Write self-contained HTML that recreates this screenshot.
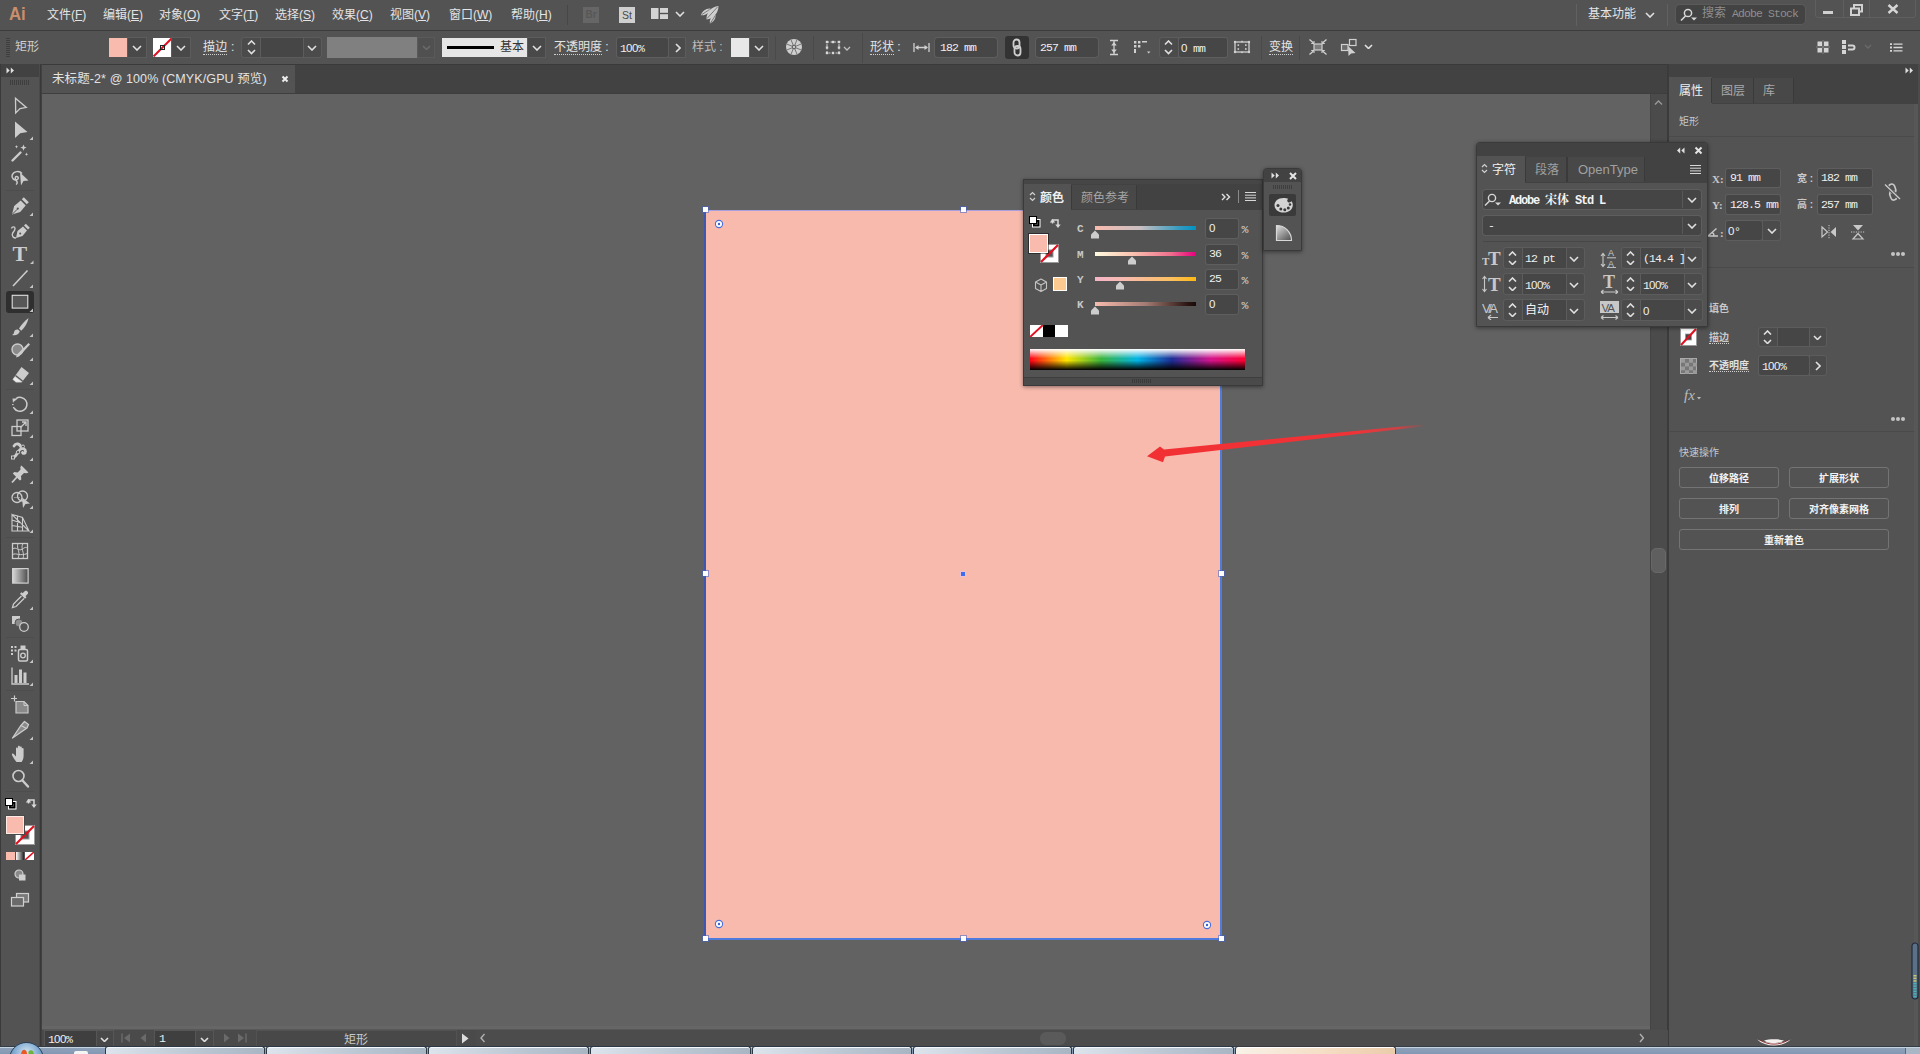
<!DOCTYPE html>
<html lang="zh-CN"><head><meta charset="utf-8"><title>Adobe Illustrator</title>
<style>
html,body{margin:0;padding:0}
body{width:1920px;height:1054px;overflow:hidden;position:relative;background:#535353;font-family:'Liberation Sans','Noto Sans CJK SC',sans-serif;font-size:12px;color:#dedede}
body>div,body>svg{position:absolute;box-sizing:border-box}
.t{white-space:nowrap}
.n{font-family:'Liberation Mono','Noto Sans CJK SC',monospace;font-size:11.5px;line-height:14px;letter-spacing:-0.9px}
.z{font-family:'Liberation Sans',sans-serif;letter-spacing:-0.4px}
.u{border-bottom:1px dotted #d0d0d0}
</style></head><body>
<div style="left:0px;top:0px;width:1920px;height:30px;background:#535353;"></div>
<div style="left:0px;top:30px;width:1920px;height:1px;background:#3c3c3c;"></div>
<div class="t" style="left:9px;top:3px;font-size:19px;line-height:22px;color:#c98f6d;font-family:'Liberation Sans','Noto Sans CJK SC',sans-serif;transform:scaleX(.88);transform-origin:0 0"><b>Ai</b></div>
<div class="t" style="left:47px;top:7px;font-size:12px;line-height:16px;color:#e4e4e4;">文件(<u>F</u>)</div>
<div class="t" style="left:103px;top:7px;font-size:12px;line-height:16px;color:#e4e4e4;">编辑(<u>E</u>)</div>
<div class="t" style="left:159px;top:7px;font-size:12px;line-height:16px;color:#e4e4e4;">对象(<u>O</u>)</div>
<div class="t" style="left:219px;top:7px;font-size:12px;line-height:16px;color:#e4e4e4;">文字(<u>T</u>)</div>
<div class="t" style="left:275px;top:7px;font-size:12px;line-height:16px;color:#e4e4e4;">选择(<u>S</u>)</div>
<div class="t" style="left:332px;top:7px;font-size:12px;line-height:16px;color:#e4e4e4;">效果(<u>C</u>)</div>
<div class="t" style="left:390px;top:7px;font-size:12px;line-height:16px;color:#e4e4e4;">视图(<u>V</u>)</div>
<div class="t" style="left:449px;top:7px;font-size:12px;line-height:16px;color:#e4e4e4;">窗口(<u>W</u>)</div>
<div class="t" style="left:511px;top:7px;font-size:12px;line-height:16px;color:#e4e4e4;">帮助(<u>H</u>)</div>
<div style="left:567px;top:5px;width:1px;height:20px;background:#474747;"></div>
<div style="left:583px;top:7px;width:16px;height:16px;background:#666666;"></div>
<div class="t" style="left:585.5px;top:8px;font-size:10px;line-height:14px;color:#575757;font-family:'Liberation Sans','Noto Sans CJK SC',sans-serif;"><b>Br</b></div>
<div style="left:619px;top:7px;width:16px;height:16px;background:#cfcfcf;"></div>
<div class="t" style="left:622px;top:8px;font-size:10.5px;line-height:14px;color:#4a4a4a;font-family:'Liberation Sans','Noto Sans CJK SC',sans-serif;">St</div>
<svg style="left:651px;top:8px;" width="17" height="11" viewBox="0 0 17 11"><rect x="0" y="0" width="7.500" height="11" fill="#d4d4d4"/><rect x="9" y="0" width="8" height="4.800" fill="#d4d4d4"/><rect x="9" y="6.200" width="8" height="4.800" fill="#d4d4d4"/></svg>
<svg style="left:675.0px;top:11.0px;" width="10" height="6" viewBox="0 0 10 6"><polyline points="1,1 5.0,5 9,1" fill="none" stroke="#e0e0e0" stroke-width="1.6"/></svg>
<svg style="left:700px;top:5px;" width="20" height="19" viewBox="0 0 20 19"><path d="M18.500 1C11 1.500 6 8 6.500 14.500 13 14 18.500 8 18.500 1z" fill="#cfcfcf"/><path d="M10.500 3.500C6 3 2 6.500 0.800 10.200 5 11 9.500 8 10.500 3.500z" fill="#cfcfcf"/><path d="M15.500 10c0.500 3.500-2 7-5.500 8.500-1-3.500 1.500-7.500 5.500-8.500z" fill="#cfcfcf"/><path d="M17.500 2L7 13.500M9.500 4.500L1.500 9.800M15 11l-4.500 7" stroke="#535353" stroke-width="0.700"/></svg>
<div style="left:1576px;top:4px;width:1px;height:22px;background:#616161;"></div>
<div style="left:1667px;top:4px;width:1px;height:22px;background:#616161;"></div>
<div class="t" style="left:1588px;top:6px;font-size:12px;line-height:16px;color:#e4e4e4;">基本功能</div>
<svg style="left:1644.5px;top:12.0px;" width="10" height="6" viewBox="0 0 10 6"><polyline points="1,1 5.0,5 9,1" fill="none" stroke="#e0e0e0" stroke-width="1.6"/></svg>
<div style="left:1676px;top:5px;width:129px;height:19px;background:#434343;border-radius:4px;box-shadow:0 0 0 1px #5a5a5a"></div>
<svg style="left:1680px;top:8px;" width="18" height="14" viewBox="0 0 18 14"><circle cx="8" cy="5" r="3.6" fill="none" stroke="#d8d8d8" stroke-width="1.5"/><line x1="5.5" y1="8" x2="1" y2="12.5" stroke="#d8d8d8" stroke-width="1.6"/><path d="M11 9.5h6l-3 3z" fill="#d8d8d8"/></svg>
<div class="t n" style="left:1702px;top:7px;color:#8e8e8e"><span style="letter-spacing:0;font-size:12px">搜索</span> Adobe Stock</div>
<div style="left:1815px;top:-3px;width:101px;height:21px;border:1px solid #5f5f5f;border-radius:3px"></div>
<div style="left:1843px;top:0px;width:1px;height:17px;background:#5f5f5f;"></div>
<div style="left:1869px;top:0px;width:1px;height:17px;background:#5f5f5f;"></div>
<div style="left:1823px;top:11px;width:10px;height:3px;background:#d0d0d0;"></div>
<svg style="left:1850px;top:4px;" width="13" height="12" viewBox="0 0 13 12"><rect x="4" y="1" width="8" height="6.5" fill="none" stroke="#d0d0d0" stroke-width="2"/><rect x="1" y="4.5" width="8" height="6.5" fill="#535353" stroke="#d0d0d0" stroke-width="2"/></svg>
<svg style="left:1887px;top:4px;" width="12" height="10" viewBox="0 0 12 10"><path d="M1.5 1 L10.5 9 M10.5 1 L1.5 9" stroke="#d6d6d6" stroke-width="2.4"/></svg>
<div style="left:0px;top:31px;width:1920px;height:33px;background:#535353;"></div>
<div style="left:6px;top:38px;width:4px;height:1px;background:#3e3e3e;"></div>
<div style="left:6px;top:40px;width:4px;height:1px;background:#3e3e3e;"></div>
<div style="left:6px;top:42px;width:4px;height:1px;background:#3e3e3e;"></div>
<div style="left:6px;top:44px;width:4px;height:1px;background:#3e3e3e;"></div>
<div style="left:6px;top:46px;width:4px;height:1px;background:#3e3e3e;"></div>
<div style="left:6px;top:48px;width:4px;height:1px;background:#3e3e3e;"></div>
<div style="left:6px;top:50px;width:4px;height:1px;background:#3e3e3e;"></div>
<div style="left:6px;top:52px;width:4px;height:1px;background:#3e3e3e;"></div>
<div style="left:6px;top:54px;width:4px;height:1px;background:#3e3e3e;"></div>
<div style="left:6px;top:56px;width:4px;height:1px;background:#3e3e3e;"></div>
<div class="t" style="left:15px;top:39px;font-size:12px;line-height:16px;color:#cfcfcf;">矩形</div>
<div style="left:109px;top:38px;width:19px;height:19px;background:#f8bbae;"></div>
<div style="left:128px;top:38px;width:18px;height:19px;background:#494949;box-shadow:0 0 0 1px #5c5c5c"></div>
<svg style="left:132.0px;top:44.5px;" width="10" height="6" viewBox="0 0 10 6"><polyline points="1,1 5.0,5 9,1" fill="none" stroke="#e0e0e0" stroke-width="1.6"/></svg>
<svg style="left:153px;top:38px;" width="19" height="19" viewBox="0 0 19 19"><rect width="19" height="19" fill="#fff"/><line x1="0.5" y1="18.5" x2="18.5" y2="0.5" stroke="#e01020" stroke-width="2"/><rect x="7.5" y="7.5" width="4" height="4" fill="none" stroke="#222" stroke-width="1"/></svg>
<div style="left:172px;top:38px;width:18px;height:19px;background:#494949;box-shadow:0 0 0 1px #5c5c5c"></div>
<svg style="left:176.0px;top:44.5px;" width="10" height="6" viewBox="0 0 10 6"><polyline points="1,1 5.0,5 9,1" fill="none" stroke="#e0e0e0" stroke-width="1.6"/></svg>
<div class="t" style="left:203px;top:39px;font-size:12px;line-height:16px;color:#e4e4e4;letter-spacing:0.2px"><span class="u">描边</span> :</div>
<div style="left:242px;top:38px;width:18px;height:19px;background:#4b4b4b;box-shadow:0 0 0 1px #5c5c5c;border-radius:2px 0 0 2px"></div>
<svg style="left:246.5px;top:40.25px;" width="9" height="5.5" viewBox="0 0 9 5.5"><polyline points="1,4.5 4.5,1 8,4.5" fill="none" stroke="#e0e0e0" stroke-width="1.6"/></svg>
<svg style="left:246.5px;top:49.25px;" width="9" height="5.5" viewBox="0 0 9 5.5"><polyline points="1,1 4.5,4.5 8,1" fill="none" stroke="#e0e0e0" stroke-width="1.6"/></svg>
<div style="left:261px;top:38px;width:42px;height:19px;background:#464646;box-shadow:0 0 0 1px #5c5c5c"></div>
<div style="left:304px;top:38px;width:17px;height:19px;background:#4b4b4b;box-shadow:0 0 0 1px #5c5c5c;border-radius:0 2px 2px 0"></div>
<svg style="left:307.0px;top:44.5px;" width="10" height="6" viewBox="0 0 10 6"><polyline points="1,1 5.0,5 9,1" fill="none" stroke="#e0e0e0" stroke-width="1.6"/></svg>
<div style="left:327px;top:37px;width:90px;height:21px;background:#808080;"></div>
<div style="left:418px;top:38px;width:16px;height:19px;background:#505050;box-shadow:0 0 0 1px #5a5a5a"></div>
<svg style="left:421.5px;top:44.75px;" width="9" height="5.5" viewBox="0 0 9 5.5"><polyline points="1,1 4.5,4.5 8,1" fill="none" stroke="#6a6a6a" stroke-width="1.6"/></svg>
<div style="left:442px;top:38px;width:86px;height:19px;background:#e6e6e6;"></div>
<div style="left:447px;top:46px;width:47px;height:3px;background:#000;"></div>
<div class="t" style="left:500px;top:40px;font-size:12px;line-height:15px;color:#333;">基本</div>
<div style="left:528px;top:38px;width:17px;height:19px;background:#494949;box-shadow:0 0 0 1px #5c5c5c"></div>
<svg style="left:531.5px;top:44.5px;" width="10" height="6" viewBox="0 0 10 6"><polyline points="1,1 5.0,5 9,1" fill="none" stroke="#e0e0e0" stroke-width="1.6"/></svg>
<div class="t" style="left:554px;top:39px;font-size:12px;line-height:16px;color:#e4e4e4;"><span class="u">不透明度</span> :</div>
<div style="left:617px;top:38px;width:51px;height:19px;background:#464646;border-radius:2px;box-shadow:0 0 0 1px #5e5e5e;"></div>
<div class="t n" style="left:620px;top:40.5px;color:#f0f0f0">1<span class="z">0</span><span class="z">0</span>%</div>
<div style="left:669px;top:38px;width:16px;height:19px;background:#4b4b4b;box-shadow:0 0 0 1px #5c5c5c"></div>
<svg style="left:674.5px;top:42.5px;" width="6" height="10" viewBox="0 0 6 10"><polyline points="1,1 5,5.0 1,9" fill="none" stroke="#e0e0e0" stroke-width="1.6"/></svg>
<div class="t" style="left:692px;top:39px;font-size:12px;line-height:16px;color:#bdbdbd;">样式 :</div>
<div style="left:731px;top:38px;width:19px;height:19px;background:#e8e8e8;"></div>
<div style="left:750px;top:38px;width:18px;height:19px;background:#494949;box-shadow:0 0 0 1px #5c5c5c"></div>
<svg style="left:754.0px;top:44.5px;" width="10" height="6" viewBox="0 0 10 6"><polyline points="1,1 5.0,5 9,1" fill="none" stroke="#e0e0e0" stroke-width="1.6"/></svg>
<div style="left:775px;top:36px;width:1px;height:24px;background:#4a4a4a;"></div>
<div style="left:813px;top:36px;width:1px;height:24px;background:#4a4a4a;"></div>
<div style="left:862px;top:33px;width:1px;height:30px;background:#494949;"></div>
<svg style="left:785px;top:38px;" width="18" height="18" viewBox="0 0 18 18"><circle cx="9" cy="9" r="8" fill="#cfcfcf"/><circle cx="9" cy="9" r="2.2" fill="#535353"/><line x1="9" y1="9" x2="16.40" y2="12.04" stroke="#6a6a6a" stroke-width="0.9"/><line x1="9" y1="9" x2="12.08" y2="16.38" stroke="#6a6a6a" stroke-width="0.9"/><line x1="9" y1="9" x2="5.96" y2="16.40" stroke="#6a6a6a" stroke-width="0.9"/><line x1="9" y1="9" x2="1.62" y2="12.08" stroke="#6a6a6a" stroke-width="0.9"/><line x1="9" y1="9" x2="1.60" y2="5.96" stroke="#6a6a6a" stroke-width="0.9"/><line x1="9" y1="9" x2="5.92" y2="1.62" stroke="#6a6a6a" stroke-width="0.9"/><line x1="9" y1="9" x2="12.04" y2="1.60" stroke="#6a6a6a" stroke-width="0.9"/><line x1="9" y1="9" x2="16.38" y2="5.92" stroke="#6a6a6a" stroke-width="0.9"/><circle cx="9" cy="9" r="1" fill="#e8e8e8"/></svg>
<svg style="left:825px;top:40px;" width="16" height="15" viewBox="0 0 16 15"><rect x="2" y="2" width="12" height="11" fill="none" stroke="#cfcfcf" stroke-width="1" stroke-dasharray="2 1.5"/><rect x="0.8" y="0.8" width="2.4" height="2.4" fill="#d8d8d8"/><rect x="0.8" y="6.3" width="2.4" height="2.4" fill="#d8d8d8"/><rect x="0.8" y="11.8" width="2.4" height="2.4" fill="#d8d8d8"/><rect x="6.8" y="0.8" width="2.4" height="2.4" fill="#d8d8d8"/><rect x="6.8" y="11.8" width="2.4" height="2.4" fill="#d8d8d8"/><rect x="12.8" y="0.8" width="2.4" height="2.4" fill="#d8d8d8"/><rect x="12.8" y="6.3" width="2.4" height="2.4" fill="#d8d8d8"/><rect x="12.8" y="11.8" width="2.4" height="2.4" fill="#d8d8d8"/></svg>
<svg style="left:842.5px;top:46.0px;" width="8" height="5" viewBox="0 0 8 5"><polyline points="1,1 4.0,4 7,1" fill="none" stroke="#c0c0c0" stroke-width="1.3"/></svg>
<div class="t" style="left:870px;top:39px;font-size:12px;line-height:16px;color:#e4e4e4;"><span class="u">形状</span> :</div>
<svg style="left:913px;top:42px;" width="17" height="11" viewBox="0 0 17 11"><path d="M1 1v9M16 1v9M3 5.5h11" stroke="#d0d0d0" stroke-width="1.3" fill="none"/><path d="M2 5.5l3.5-2.5v5zM15 5.5l-3.5-2.5v5z" fill="#d0d0d0"/></svg>
<div style="left:935px;top:38px;width:62px;height:19px;background:#464646;border-radius:3px;box-shadow:0 0 0 1px #5e5e5e;"></div>
<div class="t n" style="left:940px;top:40.5px;color:#f0f0f0">182 mm</div>
<div style="left:1005px;top:36px;width:24px;height:23px;background:#333333;border-radius:3px"></div>
<svg style="left:1011px;top:38px;" width="12" height="19" viewBox="0 0 12 19"><rect x="2.5" y="1.5" width="6" height="9" rx="3" fill="none" stroke="#cfcfcf" stroke-width="1.8"/><rect x="3.5" y="8" width="6" height="9.5" rx="3" fill="none" stroke="#cfcfcf" stroke-width="1.8"/></svg>
<div style="left:1036px;top:38px;width:62px;height:19px;background:#464646;border-radius:3px;box-shadow:0 0 0 1px #5e5e5e;"></div>
<div class="t n" style="left:1040px;top:40.5px;color:#f0f0f0">257 mm</div>
<svg style="left:1109px;top:39px;" width="10" height="17" viewBox="0 0 10 17"><path d="M1 1.5h8M1 15.5h8M5 2v13" stroke="#d0d0d0" stroke-width="1.3" fill="none"/><path d="M5 3l-2.8 3.5h5.6zM5 14l-2.8-3.5h5.6z" fill="#d0d0d0"/></svg>
<svg style="left:1133px;top:40px;" width="18" height="15" viewBox="0 0 18 15"><path d="M1 1h2.4v2.4H1zM5 1h2.4v2.4H5zM9 1h5v1.6H9zM1 5h2.4v2.4H1zM5 5h2.4v2.4H5zM1 9h2v4H1z" fill="#d0d0d0"/><path d="M14 11.5h3.4l-1.7 2z" fill="#d0d0d0"/></svg>
<div style="left:1160px;top:38px;width:18px;height:19px;background:#4b4b4b;box-shadow:0 0 0 1px #5c5c5c;border-radius:2px 0 0 2px"></div>
<svg style="left:1164.0px;top:40.25px;" width="9" height="5.5" viewBox="0 0 9 5.5"><polyline points="1,4.5 4.5,1 8,4.5" fill="none" stroke="#e0e0e0" stroke-width="1.6"/></svg>
<svg style="left:1164.0px;top:49.25px;" width="9" height="5.5" viewBox="0 0 9 5.5"><polyline points="1,1 4.5,4.5 8,1" fill="none" stroke="#e0e0e0" stroke-width="1.6"/></svg>
<div style="left:1179px;top:38px;width:48px;height:19px;background:#464646;border-radius:2px;box-shadow:0 0 0 1px #5e5e5e;"></div>
<div class="t n" style="left:1181px;top:40.5px;color:#f0f0f0"><span class="z">0</span> mm</div>
<svg style="left:1233px;top:40px;" width="18" height="14" viewBox="0 0 18 14"><rect x="2" y="2" width="14" height="10" fill="none" stroke="#d0d0d0" stroke-width="1.3"/><circle cx="2" cy="2" r="1.2" fill="#d0d0d0"/><circle cx="2" cy="12" r="1.2" fill="#d0d0d0"/><circle cx="16" cy="2" r="1.2" fill="#d0d0d0"/><circle cx="16" cy="12" r="1.2" fill="#d0d0d0"/><rect x="4.5" y="4.3" width="1.6" height="1.6" fill="#d0d0d0"/><rect x="4.5" y="8.2" width="1.6" height="1.6" fill="#d0d0d0"/><rect x="12" y="4.3" width="1.6" height="1.6" fill="#d0d0d0"/><rect x="12" y="8.2" width="1.6" height="1.6" fill="#d0d0d0"/><rect x="8.2" y="0.8" width="1.6" height="1.6" fill="#d0d0d0"/><rect x="8.2" y="11.5" width="1.6" height="1.6" fill="#d0d0d0"/></svg>
<div style="left:1261px;top:36px;width:1px;height:24px;background:#4a4a4a;"></div>
<div style="left:1299px;top:36px;width:1px;height:24px;background:#4a4a4a;"></div>
<div class="t" style="left:1269px;top:39px;font-size:12px;line-height:16px;color:#e4e4e4;"><span class="u">变换</span></div>
<svg style="left:1309px;top:39px;" width="18" height="16" viewBox="0 0 18 16"><rect x="5" y="5" width="8" height="6" fill="#7c7c7c" stroke="#d0d0d0" stroke-width="1.2"/><path d="M0.5 0.5l4 3.5M17.5 0.5l-4 3.5M0.5 15.5l4-3.5M17.5 15.5l-4-3.5" stroke="#d0d0d0" stroke-width="1.3"/><path d="M5 4.5H2.2M5 4.5V2M13 4.5h2.8M13 4.5V2M5 11.5H2.2M5 11.5V14M13 11.5h2.8M13 11.5V14" stroke="#d0d0d0" stroke-width="1.1"/></svg>
<svg style="left:1340px;top:38px;" width="19" height="19" viewBox="0 0 19 19"><rect x="9.5" y="1.5" width="6.5" height="6" fill="none" stroke="#d0d0d0" stroke-width="1.2"/><rect x="1.5" y="6.5" width="6.5" height="6" fill="#6c6c6c" stroke="#d0d0d0" stroke-width="1.2"/><path d="M8 8l0.5 10 2.6-2.6 4.4-0.3z" fill="#d0d0d0"/></svg>
<svg style="left:1363.5px;top:43.75px;" width="9" height="5.5" viewBox="0 0 9 5.5"><polyline points="1,1 4.5,4.5 8,1" fill="none" stroke="#e0e0e0" stroke-width="1.6"/></svg>
<svg style="left:1816px;top:40px;" width="14" height="14" viewBox="0 0 14 14"><path d="M1.5 1.5h4.5v4.5H1.5zM8 1.5h4.5v4.5H8zM1.5 8h4.5v4.5H1.5zM8 8h4.5v4.5H8z" fill="#d4d4d4"/><path d="M7 0v14M0 7h14" stroke="#8a8a8a" stroke-width="0.8"/></svg>
<svg style="left:1841px;top:39px;" width="17" height="16" viewBox="0 0 17 16"><path d="M1 1h4v4H1zM1 6h4v4H1zM1 11h4v4H1z" fill="#d4d4d4"/><path d="M7 5.5h4.5a3 3 0 0 1 0 6H7v-2h4.5a1 1 0 0 0 0-2H7z" fill="#d4d4d4"/></svg>
<svg style="left:1863.5px;top:43.5px;" width="8" height="5" viewBox="0 0 8 5"><polyline points="1,1 4.0,4 7,1" fill="none" stroke="#6a6a6a" stroke-width="1.3"/></svg>
<svg style="left:1890px;top:43px;" width="13" height="9" viewBox="0 0 13 9"><path d="M0 0.2h2v1.8H0zM0 3.6h2v1.8H0zM0 7h2v1.8H0zM3.5 0.4h9v1.4h-9zM3.5 3.8h9v1.4h-9zM3.5 7.2h9v1.4h-9z" fill="#d8d8d8"/></svg>
<div style="left:0px;top:64px;width:1920px;height:30px;background:#424242;"></div>
<div style="left:0px;top:64px;width:1920px;height:1px;background:#3a3a3a;"></div>
<div style="left:42px;top:65px;width:253px;height:29px;background:#535353;"></div>
<div style="left:42px;top:93px;width:1626px;height:1px;background:#3e3e3e;"></div>
<div class="t" style="left:52px;top:71px;font-size:12.5px;line-height:16px;color:#e2e2e2;letter-spacing:0.1px">未标题-2* @ 100% (CMYK/GPU 预览)</div>
<svg style="left:281px;top:75px;" width="8" height="8" viewBox="0 0 8 8"><path d="M1.500 1.500l5 5M6.500 1.500l-5 5" stroke="#eeeeee" stroke-width="2"/></svg>
<div style="left:42px;top:94px;width:1608px;height:936px;background:#626262;"></div>
<div style="left:706px;top:211px;width:514px;height:727px;background:#f7baad;"></div>
<div style="left:704px;top:210px;width:2px;height:730px;background:#3c58b2;"></div>
<div style="left:706px;top:210px;width:516px;height:1px;background:#a99fe0;"></div>
<div style="left:1220px;top:210px;width:2px;height:730px;background:#4f7bdc;"></div>
<div style="left:705px;top:938px;width:517px;height:2px;background:#4f7bdc;"></div>
<div style="left:703px;top:207px;width:5px;height:5px;background:#fff;box-shadow:0 0 0 1px rgba(70,100,200,.55)"></div>
<div style="left:961px;top:207px;width:5px;height:5px;background:#fff;box-shadow:0 0 0 1px rgba(70,100,200,.55)"></div>
<div style="left:703px;top:571px;width:5px;height:5px;background:#fff;box-shadow:0 0 0 1px rgba(70,100,200,.55)"></div>
<div style="left:1219px;top:571px;width:5px;height:5px;background:#fff;box-shadow:0 0 0 1px rgba(70,100,200,.55)"></div>
<div style="left:703px;top:936px;width:5px;height:5px;background:#fff;box-shadow:0 0 0 1px rgba(70,100,200,.55)"></div>
<div style="left:961px;top:936px;width:5px;height:5px;background:#fff;box-shadow:0 0 0 1px rgba(70,100,200,.55)"></div>
<div style="left:1219px;top:936px;width:5px;height:5px;background:#fff;box-shadow:0 0 0 1px rgba(70,100,200,.55)"></div>
<div style="left:961px;top:572px;width:4px;height:4px;background:#3f6cee;box-shadow:0 0 0 1px rgba(225,200,240,.6)"></div>
<svg style="left:714px;top:219px;" width="10" height="10" viewBox="0 0 10 10"><circle cx="5" cy="5" r="3.6" fill="#fff" stroke="#4a6fd8" stroke-width="1.1"/><circle cx="5" cy="5" r="1.2" fill="#3b5fd0"/></svg>
<svg style="left:714px;top:919px;" width="10" height="10" viewBox="0 0 10 10"><circle cx="5" cy="5" r="3.6" fill="#fff" stroke="#4a6fd8" stroke-width="1.1"/><circle cx="5" cy="5" r="1.2" fill="#3b5fd0"/></svg>
<svg style="left:1201.5px;top:919.5px;" width="10" height="10" viewBox="0 0 10 10"><circle cx="5" cy="5" r="3.6" fill="#fff" stroke="#4a6fd8" stroke-width="1.1"/><circle cx="5" cy="5" r="1.2" fill="#3b5fd0"/></svg>
<svg style="left:1140px;top:415px;" width="310" height="50" viewBox="0 0 310 50"><defs><linearGradient id="ag" x1="1" y1="0" x2="0" y2="0"><stop offset="0" stop-color="#e8383d" stop-opacity="0"/><stop offset="0.05" stop-color="#e8383d" stop-opacity="0"/><stop offset="0.14" stop-color="#ee363b" stop-opacity="0.75"/><stop offset="0.3" stop-color="#f03237" stop-opacity="1"/><stop offset="1" stop-color="#f23034"/></linearGradient></defs><path d="M300 7.800 L24 34.600 L20 31.500 L7 41.300 L23 47.200 L25 41.600 L300 9.400 Z" fill="url(#ag)"/></svg>
<div style="left:0px;top:64px;width:42px;height:982px;background:#535353;"></div>
<div style="left:0px;top:64px;width:40px;height:13px;background:#424242;"></div>
<div style="left:39px;top:64px;width:1px;height:982px;background:#4a4a4a;"></div>
<div style="left:40px;top:64px;width:1px;height:982px;background:#383838;"></div>
<div style="left:41px;top:64px;width:1px;height:982px;background:#414141;"></div>
<div style="left:0px;top:64px;width:1px;height:982px;background:#3a3a3a;"></div>
<svg style="left:6px;top:67px;" width="9" height="7" viewBox="0 0 9 7"><path d="M0.5 0.5l3.2 3-3.2 3zM4.8 0.5l3.2 3-3.2 3z" fill="#e0e0e0"/></svg>
<div style="left:10px;top:80px;width:1px;height:5px;background:#3e3e3e;"></div>
<div style="left:12px;top:80px;width:1px;height:5px;background:#3e3e3e;"></div>
<div style="left:14px;top:80px;width:1px;height:5px;background:#3e3e3e;"></div>
<div style="left:16px;top:80px;width:1px;height:5px;background:#3e3e3e;"></div>
<div style="left:18px;top:80px;width:1px;height:5px;background:#3e3e3e;"></div>
<div style="left:20px;top:80px;width:1px;height:5px;background:#3e3e3e;"></div>
<div style="left:22px;top:80px;width:1px;height:5px;background:#3e3e3e;"></div>
<div style="left:24px;top:80px;width:1px;height:5px;background:#3e3e3e;"></div>
<div style="left:26px;top:80px;width:1px;height:5px;background:#3e3e3e;"></div>
<div style="left:28px;top:80px;width:1px;height:5px;background:#3e3e3e;"></div>
<div style="left:6px;top:190px;width:28px;height:1px;background:#4d4d4d;"></div>
<div style="left:6px;top:389px;width:28px;height:1px;background:#4d4d4d;"></div>
<div style="left:6px;top:537px;width:28px;height:1px;background:#4d4d4d;"></div>
<div style="left:6px;top:637px;width:28px;height:1px;background:#4d4d4d;"></div>
<div style="left:6px;top:690px;width:28px;height:1px;background:#4d4d4d;"></div>
<div style="left:6px;top:791px;width:28px;height:1px;background:#4d4d4d;"></div>
<svg style="left:8px;top:94px;" width="26" height="24" viewBox="0 0 26 24"><path d="M7.500 4.200 L18.300 13.400 L12 14.600 L7.700 19 Z" fill="none" stroke="#cccccc" stroke-width="1.300" stroke-linejoin="miter"/></svg>
<svg style="left:8px;top:118px;" width="26" height="24" viewBox="0 0 26 24"><path d="M7 3.500 L19.500 14 L12.200 15.300 L7 20 Z" fill="#cccccc"/><path d="M25 18.500v3.500h-3.500z" fill="#c4c4c4"/></svg>
<svg style="left:8px;top:141px;" width="26" height="24" viewBox="0 0 26 24"><path d="M4.5 19.5 L12.5 11.5" stroke="#cccccc" stroke-width="2.4" stroke-linecap="round"/><path d="M15.5 3.5l.9 2.2 2.2.9-2.2.9-.9 2.2-.9-2.2-2.2-.9 2.2-.9zM8.5 4l.5 1.2 1.2.5-1.2.5-.5 1.2-.5-1.2L6.8 5.700 8 5.200zM18.500 11.500l.5 1.2 1.2.5-1.2.5-.5 1.2-.5-1.2-1.200-.5 1.200-.5z" fill="#cccccc"/></svg>
<svg style="left:8px;top:166px;" width="26" height="24" viewBox="0 0 26 24"><path d="M14 7.500C11.500 4.500 5.500 5 4.200 9c-1 3.200 2 5.500 4.500 4.800 2-.6 2.200-3.300 0-3.300-2 0-1.800 3-0.200 4.500 1 1 1 2.500-.5 3.500" fill="none" stroke="#cccccc" stroke-width="1.5"/><path d="M12 6.500l8.500 8-5 .5-2.500 4.500z" fill="#cccccc"/></svg>
<svg style="left:8px;top:194px;" width="26" height="24" viewBox="0 0 26 24"><path d="M4 20.500l2.200-8.500 6.500-5.500 5 5-5.500 6.500z" fill="#cccccc"/><path d="M13.800 5.300l2-2 5 5-2 2z" fill="#cccccc"/><path d="M4.500 20l4.800-4.800" stroke="#535353" stroke-width="1"/><circle cx="9.800" cy="14.600" r="1.100" fill="#535353"/><path d="M25 18.500v3.500h-3.500z" fill="#c4c4c4"/></svg>
<svg style="left:8px;top:218px;" width="26" height="24" viewBox="0 0 26 24"><path d="M8 20l1.500-7 5.500-4.500 4 4-4.500 5.500z" fill="#cccccc"/><path d="M16 7.500l1.800-1.800 4 4-1.800 1.800z" fill="#cccccc"/><circle cx="12.200" cy="15.500" r="1" fill="#535353"/><path d="M8 20c-2.500 0-4.500-2-3.500-4.500 1-2.300 2.500-2.200 2.500-5 0-2.200-3-2.200-3.500 0" fill="none" stroke="#cccccc" stroke-width="1.400"/></svg>
<div class="t" style="left:12.500px;top:241px;font-size:22px;line-height:26px;color:#cccccc;font-family:'Liberation Serif','Noto Serif CJK SC',serif;font-weight:bold">T</div>
<svg style="left:29px;top:260px;" width="5" height="5" viewBox="0 0 5 5"><path d="M4.500 0.500v3.500H1z" fill="#c4c4c4"/></svg>
<svg style="left:8px;top:266px;" width="26" height="24" viewBox="0 0 26 24"><path d="M5 20L19.500 4.500" stroke="#cccccc" stroke-width="1.600"/><path d="M25 18.500v3.500h-3.500z" fill="#c4c4c4"/></svg>
<div style="left:6px;top:291px;width:28px;height:22px;background:#2f2f2f;border-radius:3px"></div>
<svg style="left:8px;top:290px;" width="26" height="24" viewBox="0 0 26 24"><rect x="4.200" y="5.300" width="15.600" height="12.800" fill="#575757" stroke="#e0e0e0" stroke-width="1.100"/><path d="M25 18.500v3.500h-3.500z" fill="#c4c4c4"/></svg>
<svg style="left:8px;top:315px;" width="26" height="24" viewBox="0 0 26 24"><path d="M20.500 3c-3.500 2.500-7.500 7-9.500 10.500l2.200 2.200C16.500 13 19.500 8 20.500 3z" fill="#cccccc"/><path d="M10 14.500c-2-.5-3.800.8-4 3-.1 1.200-.8 2-2 2.500 3 1 7 0 7.800-3.700z" fill="#cccccc"/><path d="M25 18.500v3.500h-3.500z" fill="#c4c4c4"/></svg>
<svg style="left:8px;top:339px;" width="26" height="24" viewBox="0 0 26 24"><circle cx="9.500" cy="10.500" r="5.500" fill="#8a8a8a" stroke="#cccccc" stroke-width="1.400"/><path d="M20.500 4l1.500 1.500L11 17.500l-3 1 1-3z" fill="#cccccc"/><path d="M25 18.500v3.500h-3.500z" fill="#c4c4c4"/></svg>
<svg style="left:8px;top:363px;" width="26" height="24" viewBox="0 0 26 24"><path d="M13.500 4l7.500 6-7.500 9.500H8L4.500 16.500z" fill="#cccccc"/><path d="M7.500 12.500l7 5.500" stroke="#535353" stroke-width="1.200"/><path d="M5.300 16.200L8.300 18.800h4.900l-6.100-4.900z" fill="#ececec"/><path d="M25 18.500v3.500h-3.500z" fill="#c4c4c4"/></svg>
<svg style="left:8px;top:392px;" width="26" height="24" viewBox="0 0 26 24"><path d="M8 6.500A7 7 0 1 1 6 16" fill="none" stroke="#cccccc" stroke-width="1.500"/><path d="M6 16A7 7 0 0 1 5.200 10" fill="none" stroke="#cccccc" stroke-width="1.500" stroke-dasharray="1.200 1.800"/><path d="M4.500 6.500h5.500l-5 3.800z" fill="#cccccc"/><path d="M25 18.500v3.500h-3.500z" fill="#c4c4c4"/></svg>
<svg style="left:8px;top:416px;" width="26" height="24" viewBox="0 0 26 24"><rect x="4" y="10.500" width="9" height="9" fill="none" stroke="#cccccc" stroke-width="1.300"/><rect x="9" y="4" width="11" height="11" fill="none" stroke="#cccccc" stroke-width="1.300"/><path d="M12.500 11.500l5-5M14 6h4v4" fill="none" stroke="#cccccc" stroke-width="1.300"/><path d="M25 18.500v3.500h-3.500z" fill="#c4c4c4"/></svg>
<svg style="left:8px;top:439px;" width="26" height="24" viewBox="0 0 26 24"><path d="M5 18.500c4-1 4-5.500 7-8 2.500-2 5.500-.5 5.500 2 0 2-2.500 2.500-3 1M6 7c2-3.500 6-2 6.500.5" fill="none" stroke="#cccccc" stroke-width="2.800" stroke-linecap="round"/><circle cx="10" cy="13.200" r="1.700" fill="#535353" stroke="#cccccc" stroke-width="1"/><circle cx="15" cy="7.500" r="1.500" fill="#535353" stroke="#cccccc" stroke-width="1"/><rect x="3.500" y="17" width="3" height="3" fill="#535353" stroke="#cccccc" stroke-width="1"/><path d="M25 18.500v3.500h-3.500z" fill="#c4c4c4"/></svg>
<svg style="left:8px;top:462px;" width="26" height="24" viewBox="0 0 26 24"><path d="M13.500 3.500l7 7-2 .7-2.500-.3-3 3 .3 3.500-1.500 1.200-7-7 1.500-1.500 3.300.3 3-3-.3-2.500z" fill="#cccccc"/><path d="M9 15l-5 5.500" stroke="#cccccc" stroke-width="1.800"/><path d="M25 18.500v3.500h-3.500z" fill="#c4c4c4"/></svg>
<svg style="left:8px;top:487px;" width="26" height="24" viewBox="0 0 26 24"><circle cx="9" cy="10.500" r="5" fill="none" stroke="#cccccc" stroke-width="1.300"/><circle cx="14.500" cy="9" r="5" fill="none" stroke="#cccccc" stroke-width="1.300"/><path d="M6.500 10.500h5.500" stroke="#cccccc" stroke-width="1.200" stroke-dasharray="1 1"/><path d="M14 10.500l8 6-4.500.5-2.500 4z" fill="#cccccc"/><path d="M25 18.500v3.500h-3.500z" fill="#c4c4c4"/></svg>
<svg style="left:8px;top:511px;" width="26" height="24" viewBox="0 0 26 24"><path d="M4 3.500v16.500h17zM4 3.500l5.500 1.500v15M9.500 5l5 1.500V20M4 9l10.500 3.500M4 14.500L14.500 16.200M14.500 6.500L21 20" fill="none" stroke="#cccccc" stroke-width="1.100"/><path d="M25 18.500v3.500h-3.500z" fill="#c4c4c4"/></svg>
<svg style="left:8px;top:539px;" width="26" height="24" viewBox="0 0 26 24"><rect x="4.500" y="4.500" width="15" height="15" fill="none" stroke="#cccccc" stroke-width="1.300"/><path d="M4.500 10c4-3 6 3 10 0s4-1 5-1M4.500 15.500c4-2 7 2 15-1M10 4.500c-2 5 3 8 0 15M15 4.500c-3 5 2 9 0 15" fill="none" stroke="#cccccc" stroke-width="1"/></svg>
<svg style="left:12px;top:568px;" width="17" height="16" viewBox="0 0 17 16"><defs><linearGradient id="gt" x1="0" y1="0" x2="1" y2="0"><stop offset="0" stop-color="#d8d8d8"/><stop offset="1" stop-color="#4c4c4c"/></linearGradient></defs><rect x="0.600" y="0.600" width="15.500" height="14.500" fill="url(#gt)" stroke="#d0d0d0" stroke-width="1.200"/></svg>
<svg style="left:8px;top:588px;" width="26" height="24" viewBox="0 0 26 24"><path d="M17 3c1.500-1.200 4 1.300 2.800 2.800l-2.300 2.500 1 1-1.500 1.500-5-5L13.500 4.300l1 1z" fill="#cccccc"/><path d="M13.500 8L5.500 16l-1 3.500 3.500-1 8-8" fill="none" stroke="#cccccc" stroke-width="1.300"/><path d="M25 18.500v3.500h-3.500z" fill="#c4c4c4"/></svg>
<svg style="left:8px;top:612px;" width="26" height="24" viewBox="0 0 26 24"><rect x="4" y="4" width="8" height="8" fill="#cccccc"/><circle cx="11" cy="11" r="4" fill="#8c8c8c" stroke="#535353" stroke-width="1"/><circle cx="16" cy="15" r="4.300" fill="#535353" stroke="#cccccc" stroke-width="1.300"/></svg>
<svg style="left:8px;top:641px;" width="26" height="24" viewBox="0 0 26 24"><rect x="10.500" y="8.500" width="9" height="11.500" rx="1.500" fill="none" stroke="#cccccc" stroke-width="1.500"/><rect x="12.500" y="4.500" width="5" height="3.500" fill="#cccccc"/><circle cx="15" cy="14.500" r="2.300" fill="none" stroke="#cccccc" stroke-width="1.300"/><path d="M3 5h2v2H3zM6.500 5h2v2h-2zM3 8.500h2v2H3zM6.500 8.500h2v2h-2zM3 12h2v2H3z" fill="#cccccc"/><path d="M25 18.500v3.500h-3.500z" fill="#c4c4c4"/></svg>
<svg style="left:8px;top:664px;" width="26" height="24" viewBox="0 0 26 24"><path d="M4 3.500V20h17" fill="none" stroke="#cccccc" stroke-width="1.300"/><rect x="6.500" y="11" width="3" height="8" fill="#cccccc"/><rect x="11" y="5.500" width="3" height="13.500" fill="#cccccc"/><rect x="15.500" y="8.500" width="3" height="10.500" fill="#cccccc"/><path d="M25 18.500v3.500h-3.500z" fill="#c4c4c4"/></svg>
<svg style="left:8px;top:693px;" width="26" height="24" viewBox="0 0 26 24"><path d="M8 8.500h8l4 4V20H8z" fill="#8a8a8a" stroke="#cccccc" stroke-width="1.200"/><path d="M16 8.500v4h4" fill="none" stroke="#cccccc" stroke-width="1"/><path d="M6.500 2.500v6M3 5.500h6" stroke="#cccccc" stroke-width="1.200"/></svg>
<svg style="left:8px;top:718px;" width="26" height="24" viewBox="0 0 26 24"><path d="M16.500 3.500l4 3-1.500 3.500L4.500 20l8-12z" fill="#8a8a8a" stroke="#cccccc" stroke-width="1.300" stroke-linejoin="round"/><path d="M13 7.500l5.500 3" stroke="#cccccc" stroke-width="1.200"/><path d="M25 18.500v3.500h-3.500z" fill="#c4c4c4"/></svg>
<svg style="left:8px;top:742px;" width="26" height="24" viewBox="0 0 26 24"><path d="M8.500 20c-2-2-3.500-5-4.500-7-.5-1.300 1-2 2-.8l2 2.300V6.500c0-1.300 1.800-1.300 1.900 0V4.800c0-1.400 2-1.400 2 0V5.500c0-1.300 1.900-1.300 1.900 0v1.300c0-1.200 1.800-1.200 1.800 0V14c0 2.500-1 4.500-2 6z" fill="#cccccc"/><path d="M25 18.500v3.500h-3.500z" fill="#c4c4c4"/></svg>
<svg style="left:8px;top:766px;" width="26" height="24" viewBox="0 0 26 24"><circle cx="10.500" cy="10" r="5.500" fill="none" stroke="#cccccc" stroke-width="1.600"/><path d="M14.500 14.500l5.500 6" stroke="#cccccc" stroke-width="2.400" stroke-linecap="round"/></svg>
<svg style="left:5px;top:798px;" width="12" height="12" viewBox="0 0 12 12"><rect x="3.500" y="3.500" width="7.500" height="7.500" fill="#000" stroke="#fff" stroke-width="1"/><rect x="5.800" y="5.800" width="3" height="3" fill="#535353"/><rect x="0.500" y="0.500" width="7" height="7" fill="#fff" stroke="#000" stroke-width="1"/></svg>
<svg style="left:25px;top:797px;" width="12" height="12" viewBox="0 0 12 12"><path d="M3.500 6.500V3h5.500v5.500" fill="none" stroke="#d8d8d8" stroke-width="1.500"/><path d="M0.800 5.500l2.700-3.500 2.700 3.500zM6.300 7.500l2.700 3.500 2.700-3.500z" fill="#d8d8d8"/></svg>
<svg style="left:15px;top:825px;" width="20" height="20" viewBox="0 0 20 20"><rect x="0.500" y="0.500" width="19" height="19" fill="#fff" stroke="#9a9a9a"/><rect x="6" y="6" width="8" height="8" fill="#535353" stroke="#9a9a9a"/><line x1="1" y1="19" x2="19" y2="1" stroke="#e01020" stroke-width="2.200"/></svg>
<div style="left:6px;top:816px;width:18px;height:18px;background:#f8bbae;border:1px solid #ffe9e4;box-shadow:0 0 0 1px #4a4a4a"></div>
<div style="left:6px;top:852px;width:9px;height:8px;background:#f8bbae;"></div>
<div style="left:16px;top:852px;width:8px;height:8px;background:linear-gradient(90deg,#fff,#222)"></div>
<svg style="left:25px;top:852px;" width="9" height="8" viewBox="0 0 9 8"><rect width="9" height="8" fill="#fff"/><line x1="0" y1="8" x2="9" y2="0" stroke="#e01020" stroke-width="1.600"/></svg>
<svg style="left:13px;top:868px;" width="14" height="14" viewBox="0 0 14 14"><circle cx="6" cy="6" r="4" fill="#8a8a8a" stroke="#d0d0d0" stroke-width="1.200"/><rect x="6" y="6.500" width="6.500" height="6" fill="#cfcfcf"/></svg>
<svg style="left:10px;top:892px;" width="20" height="16" viewBox="0 0 20 16"><rect x="6.500" y="1.500" width="12" height="8.500" fill="#7a7a7a" stroke="#d0d0d0" stroke-width="1.200"/><rect x="1.500" y="5.500" width="12" height="8.500" fill="#6a6a6a" stroke="#d0d0d0" stroke-width="1.200"/></svg>
<div style="left:1650px;top:94px;width:18px;height:936px;background:#4b4b4b;"></div>
<div style="left:1650px;top:94px;width:1px;height:936px;background:#444444;"></div>
<svg style="left:1654.0px;top:100.25px;" width="9" height="5.5" viewBox="0 0 9 5.5"><polyline points="1,4.5 4.5,1 8,4.5" fill="none" stroke="#9a9a9a" stroke-width="1.3"/></svg>
<div style="left:1651px;top:548px;width:15px;height:25px;background:#5f5f5f;border-radius:5px;border:1px solid #686868"></div>
<div style="left:1668px;top:64px;width:252px;height:982px;background:#535353;"></div>
<div style="left:1667px;top:64px;width:2px;height:982px;background:#3b3b3b;"></div>
<div style="left:1669px;top:64px;width:251px;height:13px;background:#424242;"></div>
<svg style="left:1905px;top:67px;" width="9" height="7" viewBox="0 0 9 7"><path d="M0.500 0.500l3.200 3-3.200 3zM4.800 0.500l3.200 3-3.200 3z" fill="#e0e0e0"/></svg>
<div style="left:1669px;top:77px;width:251px;height:27px;background:#424242;"></div>
<div style="left:1669px;top:77px;width:43px;height:27px;background:#535353;"></div>
<div style="left:1712px;top:78px;width:41px;height:25px;background:#484848;"></div>
<div style="left:1754px;top:78px;width:39px;height:25px;background:#484848;"></div>
<div style="left:1753px;top:78px;width:1px;height:25px;background:#3a3a3a;"></div>
<div style="left:1793px;top:78px;width:1px;height:25px;background:#3a3a3a;"></div>
<div style="left:1711px;top:78px;width:1px;height:25px;background:#3a3a3a;"></div>
<div class="t" style="left:1679px;top:83px;font-size:12px;line-height:16px;color:#f0f0f0;">属性</div>
<div class="t" style="left:1721px;top:83px;font-size:12px;line-height:16px;color:#a8a8a8;">图层</div>
<div class="t" style="left:1763px;top:83px;font-size:12px;line-height:16px;color:#a8a8a8;">库</div>
<div style="left:1914px;top:104px;width:4px;height:942px;background:#575757;"></div>
<div style="left:1918px;top:64px;width:2px;height:982px;background:#4b4b4b;"></div>
<div class="t" style="left:1679px;top:115px;font-size:10px;line-height:14px;color:#c8c8c8;">矩形</div>
<div style="left:1669px;top:136px;width:245px;height:1px;background:#4a4a4a;"></div>
<div class="t" style="left:1712px;top:172px;font-size:11px;line-height:14px;color:#c8c8c8;font-family:'Liberation Serif','Noto Serif CJK SC',serif;font-weight:bold">X:</div>
<div style="left:1726px;top:169px;width:54px;height:18px;background:#464646;border-radius:2px;box-shadow:0 0 0 1px #5e5e5e;"></div>
<div class="t n" style="left:1730px;top:171.0px;color:#f0f0f0">91 mm</div>
<div class="t" style="left:1797px;top:172px;font-size:10px;line-height:14px;color:#c8c8c8;font-weight:bold">宽 :</div>
<div style="left:1818px;top:169px;width:54px;height:18px;background:#464646;border-radius:2px;box-shadow:0 0 0 1px #5e5e5e;"></div>
<div class="t n" style="left:1821px;top:171.0px;color:#f0f0f0">182 mm</div>
<div class="t" style="left:1712px;top:198px;font-size:11px;line-height:14px;color:#c8c8c8;font-family:'Liberation Serif','Noto Serif CJK SC',serif;font-weight:bold">Y:</div>
<div style="left:1726px;top:195px;width:54px;height:19px;background:#464646;border-radius:2px;box-shadow:0 0 0 1px #5e5e5e;"></div>
<div class="t n" style="left:1730px;top:197.5px;color:#f0f0f0">128.5 mm</div>
<div class="t" style="left:1797px;top:198px;font-size:10px;line-height:14px;color:#c8c8c8;font-weight:bold">高 :</div>
<div style="left:1818px;top:195px;width:54px;height:19px;background:#464646;border-radius:2px;box-shadow:0 0 0 1px #5e5e5e;"></div>
<div class="t n" style="left:1821px;top:197.5px;color:#f0f0f0">257 mm</div>
<svg style="left:1707px;top:226px;" width="12" height="11" viewBox="0 0 12 11"><path d="M1 10h10M1 10L9.500 2.500M7 10a4 4 0 0 0-1.800-3.700" fill="none" stroke="#c8c8c8" stroke-width="1.400"/></svg>
<div class="t" style="left:1720px;top:226px;font-size:11px;line-height:14px;color:#c8c8c8;font-family:'Liberation Serif','Noto Serif CJK SC',serif;font-weight:bold">:</div>
<div style="left:1726px;top:221px;width:36px;height:19px;background:#464646;border-radius:2px;box-shadow:0 0 0 1px #5e5e5e;"></div>
<div class="t n" style="left:1728px;top:223.5px;color:#f0f0f0"><span class="z">0</span>°</div>
<div style="left:1763px;top:221px;width:17px;height:19px;background:#4b4b4b;box-shadow:0 0 0 1px #5c5c5c;border-radius:0 2px 2px 0"></div>
<svg style="left:1766.5px;top:228.0px;" width="10" height="6" viewBox="0 0 10 6"><polyline points="1,1 5.0,5 9,1" fill="none" stroke="#e0e0e0" stroke-width="1.6"/></svg>
<svg style="left:1883px;top:182px;" width="19" height="20" viewBox="0 0 19 20"><rect x="7.500" y="2" width="6" height="9" rx="3" fill="none" stroke="#c8c8c8" stroke-width="1.600" transform="rotate(-20 10 10)"/><rect x="6" y="9" width="6" height="9" rx="3" fill="none" stroke="#c8c8c8" stroke-width="1.600" transform="rotate(-20 10 10)"/><path d="M2 2.500L17 17" stroke="#535353" stroke-width="3.600"/><path d="M2 2.500L17 17" stroke="#c8c8c8" stroke-width="1.400"/></svg>
<svg style="left:1821px;top:225px;" width="16" height="14" viewBox="0 0 16 14"><path d="M1 2l5.500 5L1 12z" fill="none" stroke="#c8c8c8" stroke-width="1.200"/><path d="M15 2L9.500 7l5.500 5z" fill="#c8c8c8"/><path d="M8 0v14" stroke="#c8c8c8" stroke-width="1" stroke-dasharray="1.200 1.200"/></svg>
<svg style="left:1851px;top:224px;" width="14" height="16" viewBox="0 0 14 16"><path d="M2 1l5 5.500L12 1z" fill="#c8c8c8"/><path d="M2 15l5-5.500 5 5.500z" fill="none" stroke="#c8c8c8" stroke-width="1.200"/><path d="M0 8h14" stroke="#c8c8c8" stroke-width="1" stroke-dasharray="1.200 1.200"/></svg>
<div style="left:1891px;top:252px;width:4px;height:4px;background:#c4c4c4;border-radius:2px"></div>
<div style="left:1896px;top:252px;width:4px;height:4px;background:#c4c4c4;border-radius:2px"></div>
<div style="left:1901px;top:252px;width:4px;height:4px;background:#c4c4c4;border-radius:2px"></div>
<div style="left:1669px;top:267px;width:245px;height:1px;background:#4a4a4a;"></div>
<div class="t" style="left:1709px;top:302px;font-size:10px;line-height:14px;color:#c8c8c8;font-weight:bold">填色</div>
<svg style="left:1680px;top:328px;" width="17" height="18" viewBox="0 0 17 18"><rect x="0.500" y="0.500" width="16" height="17" fill="#fff" stroke="#999"/><rect x="5.500" y="6" width="6" height="6" fill="#444" stroke="#999" stroke-width="0.800"/><line x1="1" y1="17" x2="16" y2="1" stroke="#e01020" stroke-width="2"/></svg>
<div class="t" style="left:1709px;top:331px;font-size:10px;line-height:13px;color:#c8c8c8;font-weight:bold"><span class="u">描边</span></div>
<div style="left:1759px;top:328px;width:18px;height:18px;background:#4b4b4b;box-shadow:0 0 0 1px #5c5c5c;border-radius:2px 0 0 2px"></div>
<svg style="left:1763.0px;top:329.75px;" width="9" height="5.5" viewBox="0 0 9 5.5"><polyline points="1,4.5 4.5,1 8,4.5" fill="none" stroke="#e0e0e0" stroke-width="1.6"/></svg>
<svg style="left:1763.0px;top:338.75px;" width="9" height="5.5" viewBox="0 0 9 5.5"><polyline points="1,1 4.5,4.5 8,1" fill="none" stroke="#e0e0e0" stroke-width="1.6"/></svg>
<div style="left:1778px;top:328px;width:31px;height:18px;background:#464646;box-shadow:0 0 0 1px #5c5c5c"></div>
<div style="left:1810px;top:328px;width:16px;height:18px;background:#4b4b4b;box-shadow:0 0 0 1px #5c5c5c;border-radius:0 2px 2px 0"></div>
<svg style="left:1813.0px;top:334.75px;" width="9" height="5.5" viewBox="0 0 9 5.5"><polyline points="1,1 4.5,4.5 8,1" fill="none" stroke="#e0e0e0" stroke-width="1.6"/></svg>
<svg style="left:1680px;top:358px;" width="17" height="16" viewBox="0 0 17 16"><rect x="0.500" y="0.500" width="16" height="15" fill="#777" stroke="#aaa"/><rect x="1" y="1.0" width="4" height="3.750" fill="#9a9a9a"/><rect x="1" y="8.5" width="4" height="3.750" fill="#9a9a9a"/><rect x="5" y="4.75" width="4" height="3.750" fill="#9a9a9a"/><rect x="5" y="12.25" width="4" height="3.750" fill="#9a9a9a"/><rect x="9" y="1.0" width="4" height="3.750" fill="#9a9a9a"/><rect x="9" y="8.5" width="4" height="3.750" fill="#9a9a9a"/><rect x="13" y="4.75" width="4" height="3.750" fill="#9a9a9a"/><rect x="13" y="12.25" width="4" height="3.750" fill="#9a9a9a"/></svg>
<div class="t" style="left:1709px;top:359px;font-size:10px;line-height:13px;color:#e0e0e0;font-weight:bold"><span class="u">不透明度</span></div>
<div style="left:1759px;top:356px;width:50px;height:19px;background:#464646;border-radius:2px;box-shadow:0 0 0 1px #5e5e5e;"></div>
<div class="t n" style="left:1762px;top:358.5px;color:#f0f0f0">1<span class="z">0</span><span class="z">0</span>%</div>
<div style="left:1810px;top:356px;width:16px;height:19px;background:#4b4b4b;box-shadow:0 0 0 1px #5c5c5c;border-radius:0 2px 2px 0"></div>
<svg style="left:1815.0px;top:360.5px;" width="6" height="10" viewBox="0 0 6 10"><polyline points="1,1 5,5.0 1,9" fill="none" stroke="#e0e0e0" stroke-width="1.6"/></svg>
<div class="t" style="left:1684px;top:386px;font-size:15px;line-height:18px;color:#bcbcbc;font-family:'Liberation Serif','Noto Serif CJK SC',serif;"><i>fx</i></div>
<svg style="left:1697px;top:397px;" width="5" height="4" viewBox="0 0 5 4"><path d="M0 0h4l-2 2.500z" fill="#bcbcbc"/></svg>
<div style="left:1891px;top:417px;width:4px;height:4px;background:#c4c4c4;border-radius:2px"></div>
<div style="left:1896px;top:417px;width:4px;height:4px;background:#c4c4c4;border-radius:2px"></div>
<div style="left:1901px;top:417px;width:4px;height:4px;background:#c4c4c4;border-radius:2px"></div>
<div style="left:1669px;top:431px;width:245px;height:1px;background:#4a4a4a;"></div>
<div class="t" style="left:1679px;top:446px;font-size:10px;line-height:14px;color:#c8c8c8;">快速操作</div>
<div class="t" style="left:1679px;top:467px;width:100px;height:21px;border:1px solid #747474;border-radius:3px;text-align:center;font-size:10px;line-height:21px;color:#f2f2f2;font-weight:bold">位移路径</div>
<div class="t" style="left:1789px;top:467px;width:100px;height:21px;border:1px solid #747474;border-radius:3px;text-align:center;font-size:10px;line-height:21px;color:#f2f2f2;font-weight:bold">扩展形状</div>
<div class="t" style="left:1679px;top:498px;width:100px;height:21px;border:1px solid #747474;border-radius:3px;text-align:center;font-size:10px;line-height:21px;color:#f2f2f2;font-weight:bold">排列</div>
<div class="t" style="left:1789px;top:498px;width:100px;height:21px;border:1px solid #747474;border-radius:3px;text-align:center;font-size:10px;line-height:21px;color:#f2f2f2;font-weight:bold">对齐像素网格</div>
<div class="t" style="left:1679px;top:529px;width:210px;height:21px;border:1px solid #747474;border-radius:3px;text-align:center;font-size:10px;line-height:21px;color:#f2f2f2;font-weight:bold">重新着色</div>
<svg style="left:1911px;top:942px;" width="8" height="58" viewBox="0 0 8 58"><rect x="1" y="1" width="6" height="56" rx="3" fill="#5c7088" stroke="#1e2c3c" stroke-width="1.200"/><rect x="2.500" y="33.0" width="3" height="1.500" fill="#cfc870"/><rect x="2.500" y="35.6" width="3" height="1.500" fill="#cfc870"/><rect x="2.500" y="38.2" width="3" height="1.500" fill="#cfc870"/><rect x="2.500" y="40.8" width="3" height="1.500" fill="#46b8b4"/><rect x="2.500" y="43.4" width="3" height="1.500" fill="#46b8b4"/><rect x="2.500" y="46.0" width="3" height="1.500" fill="#46b8b4"/><rect x="2.500" y="48.6" width="3" height="1.500" fill="#46b8b4"/><rect x="2.500" y="51.2" width="3" height="1.500" fill="#46b8b4"/><rect x="2.500" y="53.8" width="3" height="1.500" fill="#46b8b4"/></svg>
<div style="left:1023px;top:179px;width:240px;height:207px;background:#535353;border:1px solid #3a3a3a;box-shadow:0 1px 4px rgba(0,0,0,.45)"></div>
<div style="left:1024px;top:180px;width:238px;height:4px;background:#464646;"></div>
<div style="left:1024px;top:184px;width:238px;height:26px;background:#424242;"></div>
<div style="left:1024px;top:184px;width:47px;height:26px;background:#535353;"></div>
<div style="left:1072px;top:185px;width:64px;height:24px;background:#484848;"></div>
<div style="left:1071px;top:185px;width:1px;height:24px;background:#3a3a3a;"></div>
<div style="left:1136px;top:185px;width:1px;height:24px;background:#3a3a3a;"></div>
<svg style="left:1029px;top:191px;" width="7" height="11" viewBox="0 0 7 11"><path d="M1 4l2.500-2.500L6 4M1 7l2.500 2.500L6 7" fill="none" stroke="#d0d0d0" stroke-width="1.200"/></svg>
<div class="t" style="left:1040px;top:189.5px;font-size:12px;line-height:16px;color:#f0f0f0;font-weight:bold">颜色</div>
<div class="t" style="left:1081px;top:189.5px;font-size:12px;line-height:16px;color:#a6a6a6;">颜色参考</div>
<svg style="left:1221px;top:193px;" width="10" height="8" viewBox="0 0 10 8"><path d="M1 1l3 3-3 3M5.500 1l3 3-3 3" fill="none" stroke="#e0e0e0" stroke-width="1.400"/></svg>
<div style="left:1238px;top:190px;width:1px;height:13px;background:#8a8a8a;"></div>
<svg style="left:1245px;top:192px;" width="12" height="9" viewBox="0 0 12 9"><path d="M0 0.500h11M0 3.200h11M0 5.900h11M0 8.500h11" stroke="#d8d8d8" stroke-width="1"/></svg>
<svg style="left:1029px;top:216px;" width="12" height="12" viewBox="0 0 12 12"><rect x="3.500" y="3.500" width="7.500" height="7.500" fill="#000" stroke="#fff" stroke-width="1"/><rect x="5.800" y="5.800" width="3" height="3" fill="#535353"/><rect x="0.500" y="0.500" width="7" height="7" fill="#fff" stroke="#000" stroke-width="1"/></svg>
<svg style="left:1049px;top:217px;" width="12" height="12" viewBox="0 0 12 12"><path d="M3.500 6.500V3h5.500v5.500" fill="none" stroke="#d8d8d8" stroke-width="1.500"/><path d="M0.800 5.500l2.700-3.500 2.700 3.500zM6.300 7.500l2.700 3.500 2.700-3.500z" fill="#d8d8d8"/></svg>
<svg style="left:1040px;top:244px;" width="19" height="19" viewBox="0 0 19 19"><rect x="0.500" y="0.500" width="18" height="18" fill="#fff" stroke="#9a9a9a"/><rect x="6" y="6" width="7" height="7" fill="#535353" stroke="#9a9a9a"/><line x1="1" y1="18" x2="18" y2="1" stroke="#e01020" stroke-width="2.200"/></svg>
<div style="left:1029px;top:234px;width:19px;height:19px;background:#f8bbae;border:1px solid #fff;box-shadow:0 0 0 1px rgba(0,0,0,.45)"></div>
<svg style="left:1034px;top:278px;" width="14" height="14" viewBox="0 0 14 14"><path d="M7 1l5.500 3v6.500L7 13.500 1.500 10.500V4zM1.500 4L7 7l5.500-3M7 7v6.500" fill="none" stroke="#c4c4c4" stroke-width="1.100" stroke-linejoin="round"/></svg>
<div style="left:1053px;top:277px;width:14px;height:14px;background:#fcc990;border:1px solid #fff"></div>
<div class="t" style="left:1077px;top:222px;font-size:11px;line-height:14px;color:#c8c8c8;font-family:'Liberation Mono','Noto Sans CJK SC',monospace;font-weight:bold">C</div>
<div style="left:1095px;top:226px;width:101px;height:4px;background:linear-gradient(90deg,#f8bbae,#c9bfc2 45%,#2f9ac0 85%,#0093c4)"></div>
<svg style="left:1089.5px;top:230px;" width="10" height="9" viewBox="0 0 10 9"><path d="M5 0.500l4 4v4H1v-4z" fill="#cdcdcd"/></svg>
<div style="left:1206px;top:219px;width:32px;height:19px;background:#464646;border-radius:2px;box-shadow:0 0 0 1px #5e5e5e;"></div>
<div class="t n" style="left:1209px;top:221px;color:#f0f0f0"><span class="z">0</span></div>
<div class="t n" style="left:1241.5px;top:223px;color:#d0d0d0">%</div>
<div class="t" style="left:1077px;top:248px;font-size:11px;line-height:14px;color:#c8c8c8;font-family:'Liberation Mono','Noto Sans CJK SC',monospace;font-weight:bold">M</div>
<div style="left:1095px;top:252px;width:101px;height:4px;background:linear-gradient(90deg,#fffbe0,#f9c4b0 36%,#ef6f8d 75%,#e6007e)"></div>
<svg style="left:1126.5px;top:256px;" width="10" height="9" viewBox="0 0 10 9"><path d="M5 0.500l4 4v4H1v-4z" fill="#cdcdcd"/></svg>
<div style="left:1206px;top:245px;width:32px;height:19px;background:#464646;border-radius:2px;box-shadow:0 0 0 1px #5e5e5e;"></div>
<div class="t n" style="left:1209px;top:247px;color:#f0f0f0">36</div>
<div class="t n" style="left:1241.5px;top:249px;color:#d0d0d0">%</div>
<div class="t" style="left:1077px;top:273px;font-size:11px;line-height:14px;color:#c8c8c8;font-family:'Liberation Mono','Noto Sans CJK SC',monospace;font-weight:bold">Y</div>
<div style="left:1095px;top:277px;width:101px;height:4px;background:linear-gradient(90deg,#f5b5c8,#f8bbae 30%,#fbbf60 75%,#fdb913)"></div>
<svg style="left:1114.5px;top:281px;" width="10" height="9" viewBox="0 0 10 9"><path d="M5 0.500l4 4v4H1v-4z" fill="#cdcdcd"/></svg>
<div style="left:1206px;top:270px;width:32px;height:19px;background:#464646;border-radius:2px;box-shadow:0 0 0 1px #5e5e5e;"></div>
<div class="t n" style="left:1209px;top:272px;color:#f0f0f0">25</div>
<div class="t n" style="left:1241.5px;top:274px;color:#d0d0d0">%</div>
<div class="t" style="left:1077px;top:298px;font-size:11px;line-height:14px;color:#c8c8c8;font-family:'Liberation Mono','Noto Sans CJK SC',monospace;font-weight:bold">K</div>
<div style="left:1095px;top:302px;width:101px;height:4px;background:linear-gradient(90deg,#f8bbae,#a47c74 50%,#2a1512 92%,#1a0b08)"></div>
<svg style="left:1089.5px;top:306px;" width="10" height="9" viewBox="0 0 10 9"><path d="M5 0.500l4 4v4H1v-4z" fill="#cdcdcd"/></svg>
<div style="left:1206px;top:295px;width:32px;height:19px;background:#464646;border-radius:2px;box-shadow:0 0 0 1px #5e5e5e;"></div>
<div class="t n" style="left:1209px;top:297px;color:#f0f0f0"><span class="z">0</span></div>
<div class="t n" style="left:1241.5px;top:299px;color:#d0d0d0">%</div>
<svg style="left:1030px;top:325px;" width="13" height="12" viewBox="0 0 13 12"><rect width="13" height="12" fill="#fff"/><line x1="0" y1="12" x2="13" y2="0" stroke="#e01020" stroke-width="2"/></svg>
<div style="left:1043px;top:325px;width:12px;height:12px;background:#000;"></div>
<div style="left:1055px;top:325px;width:13px;height:12px;background:#fff;"></div>
<div style="left:1030px;top:349px;width:215px;height:21px;background:linear-gradient(180deg,rgba(255,255,255,1) 0%,rgba(255,255,255,0) 45%,rgba(0,0,0,0) 55%,rgba(0,0,0,1) 100%),linear-gradient(90deg,#ff0018 0%,#ffe600 17%,#3cb43c 33%,#00b4e6 50%,#1e2d96 66%,#d2148c 84%,#ff0030 100%)"></div>
<div style="left:1024px;top:377px;width:238px;height:1px;background:#3e3e3e;"></div>
<div style="left:1024px;top:378px;width:238px;height:7px;background:#4a4a4a;"></div>
<div style="left:1132px;top:379px;width:1px;height:4px;background:#3a3a3a;"></div>
<div style="left:1134px;top:379px;width:1px;height:4px;background:#3a3a3a;"></div>
<div style="left:1136px;top:379px;width:1px;height:4px;background:#3a3a3a;"></div>
<div style="left:1138px;top:379px;width:1px;height:4px;background:#3a3a3a;"></div>
<div style="left:1140px;top:379px;width:1px;height:4px;background:#3a3a3a;"></div>
<div style="left:1142px;top:379px;width:1px;height:4px;background:#3a3a3a;"></div>
<div style="left:1144px;top:379px;width:1px;height:4px;background:#3a3a3a;"></div>
<div style="left:1146px;top:379px;width:1px;height:4px;background:#3a3a3a;"></div>
<div style="left:1148px;top:379px;width:1px;height:4px;background:#3a3a3a;"></div>
<div style="left:1150px;top:379px;width:1px;height:4px;background:#3a3a3a;"></div>
<div style="left:1263px;top:168px;width:39px;height:83px;background:#535353;border:1px solid #3a3a3a;border-radius:4px 4px 0 0;box-shadow:0 1px 4px rgba(0,0,0,.45)"></div>
<div style="left:1264px;top:169px;width:37px;height:13px;background:#424242;border-radius:3px 3px 0 0"></div>
<svg style="left:1271px;top:172px;" width="9" height="7" viewBox="0 0 9 7"><path d="M0.500 0.500l3.200 3-3.200 3zM4.800 0.500l3.200 3-3.200 3z" fill="#e0e0e0"/></svg>
<svg style="left:1289px;top:172px;" width="8" height="8" viewBox="0 0 8 8"><path d="M1 1l6 6M7 1l-6 6" stroke="#e4e4e4" stroke-width="2"/></svg>
<div style="left:1273px;top:185px;width:1px;height:4px;background:#3e3e3e;"></div>
<div style="left:1275px;top:185px;width:1px;height:4px;background:#3e3e3e;"></div>
<div style="left:1277px;top:185px;width:1px;height:4px;background:#3e3e3e;"></div>
<div style="left:1279px;top:185px;width:1px;height:4px;background:#3e3e3e;"></div>
<div style="left:1281px;top:185px;width:1px;height:4px;background:#3e3e3e;"></div>
<div style="left:1283px;top:185px;width:1px;height:4px;background:#3e3e3e;"></div>
<div style="left:1285px;top:185px;width:1px;height:4px;background:#3e3e3e;"></div>
<div style="left:1287px;top:185px;width:1px;height:4px;background:#3e3e3e;"></div>
<div style="left:1289px;top:185px;width:1px;height:4px;background:#3e3e3e;"></div>
<div style="left:1291px;top:185px;width:1px;height:4px;background:#3e3e3e;"></div>
<div style="left:1269px;top:194px;width:27px;height:22px;background:#3a3a3a;border-radius:2px"></div>
<svg style="left:1273px;top:197px;" width="21" height="17" viewBox="0 0 21 17"><path d="M10.500 1C5 1 1.500 4.200 1.500 8.200c0 4 3.800 7.300 9 7.300 5.500 0 9.300-3.300 9.300-7.600 0-1.400-.5-2.600-1.300-3.600-.9 1.200-2.600 1.500-3.600.6-1-.9-.8-2.400.3-3.200C14 1.200 12.300 1 10.500 1z" fill="#d4d4d4"/><circle cx="5" cy="8.500" r="1.500" fill="#3a3a3a"/><circle cx="7.800" cy="12" r="1.500" fill="#3a3a3a"/><circle cx="11.800" cy="12.800" r="1.500" fill="#3a3a3a"/><circle cx="15.300" cy="11" r="1.500" fill="#3a3a3a"/><circle cx="17" cy="7.500" r="1.200" fill="#3a3a3a"/></svg>
<svg style="left:1275px;top:224px;" width="18" height="18" viewBox="0 0 18 18"><defs><linearGradient id="qg" x1="0" y1="0" x2="0.800" y2="1"><stop offset="0" stop-color="#e0e0e0"/><stop offset="1" stop-color="#5a5a5a"/></linearGradient></defs><path d="M1.500 16.500V1.500C10 1.500 16.500 8 16.500 16.500z" fill="url(#qg)" stroke="#d8d8d8" stroke-width="1.200"/></svg>
<div style="left:1476px;top:142px;width:232px;height:185px;background:#535353;border:1px solid #3a3a3a;border-radius:4px 4px 0 0;box-shadow:0 1px 4px rgba(0,0,0,.45)"></div>
<div style="left:1477px;top:143px;width:230px;height:13px;background:#424242;border-radius:3px 3px 0 0"></div>
<svg style="left:1676px;top:147px;" width="9" height="7" viewBox="0 0 9 7"><path d="M8.500 0.500l-3.200 3 3.200 3zM4.200 0.500l-3.200 3 3.200 3z" fill="#e0e0e0"/></svg>
<svg style="left:1694px;top:146px;" width="9" height="9" viewBox="0 0 9 9"><path d="M1.500 1.500l6 6M7.500 1.500l-6 6" stroke="#e4e4e4" stroke-width="2"/></svg>
<div style="left:1477px;top:156px;width:230px;height:27px;background:#424242;"></div>
<div style="left:1477px;top:156px;width:48px;height:27px;background:#535353;"></div>
<div style="left:1526px;top:157px;width:40px;height:25px;background:#484848;"></div>
<div style="left:1568px;top:157px;width:76px;height:25px;background:#484848;"></div>
<div style="left:1525px;top:157px;width:1px;height:25px;background:#3a3a3a;"></div>
<div style="left:1566px;top:157px;width:1px;height:25px;background:#3a3a3a;"></div>
<div style="left:1567px;top:157px;width:1px;height:25px;background:#3a3a3a;"></div>
<div style="left:1644px;top:157px;width:1px;height:25px;background:#3a3a3a;"></div>
<svg style="left:1481px;top:163px;" width="7" height="11" viewBox="0 0 7 11"><path d="M1 4l2.500-2.500L6 4M1 7l2.500 2.500L6 7" fill="none" stroke="#d0d0d0" stroke-width="1.200"/></svg>
<div class="t" style="left:1492px;top:162px;font-size:12px;line-height:16px;color:#f0f0f0;">字符</div>
<div class="t" style="left:1535px;top:162px;font-size:12px;line-height:16px;color:#a0a0a0;">段落</div>
<div class="t" style="left:1578px;top:161px;font-size:13px;line-height:18px;color:#a0a0a0;">OpenType</div>
<svg style="left:1690px;top:165px;" width="12" height="9" viewBox="0 0 12 9"><path d="M0 0.500h11M0 3.200h11M0 5.900h11M0 8.500h11" stroke="#d8d8d8" stroke-width="1"/></svg>
<div style="left:1483px;top:190px;width:218px;height:19px;background:#454545;border-radius:3px;box-shadow:0 0 0 1px #5e5e5e;"></div>
<div style="left:1682px;top:191px;width:1px;height:17px;background:#585858;"></div>
<svg style="left:1484px;top:193px;" width="18" height="14" viewBox="0 0 18 14"><circle cx="8" cy="5" r="3.600" fill="none" stroke="#d8d8d8" stroke-width="1.400"/><line x1="5.500" y1="8" x2="1" y2="12.500" stroke="#d8d8d8" stroke-width="1.500"/><path d="M11 9.500h6l-3 3z" fill="#d8d8d8"/></svg>
<div class="t" style="left:1509px;top:193px;font-family:'Liberation Mono','Noto Sans CJK SC',monospace;font-size:12px;line-height:15px;letter-spacing:-1.200px;color:#f4f4f4;font-weight:bold">Adobe <span style="letter-spacing:0;font-family:'Liberation Serif','Noto Serif CJK SC',serif">宋体</span> Std L</div>
<svg style="left:1687.0px;top:196.5px;" width="10" height="6" viewBox="0 0 10 6"><polyline points="1,1 5.0,5 9,1" fill="none" stroke="#e0e0e0" stroke-width="1.6"/></svg>
<div style="left:1483px;top:216px;width:218px;height:19px;background:#454545;border-radius:3px;box-shadow:0 0 0 1px #5e5e5e;"></div>
<div style="left:1682px;top:217px;width:1px;height:17px;background:#585858;"></div>
<div class="t n" style="left:1488px;top:219px;color:#f0f0f0">-</div>
<svg style="left:1687.0px;top:222.5px;" width="10" height="6" viewBox="0 0 10 6"><polyline points="1,1 5.0,5 9,1" fill="none" stroke="#e0e0e0" stroke-width="1.6"/></svg>
<div style="left:1483px;top:241px;width:218px;height:1px;background:#474747;"></div>
<svg style="left:1482px;top:248px;" width="20" height="20" viewBox="0 0 20 20"><text x="0" y="17" font-family="Liberation Serif,serif" font-weight="bold" font-size="11" fill="#c8c8c8">T</text><text x="6" y="17" font-family="Liberation Serif,serif" font-weight="bold" font-size="19" fill="#c8c8c8">T</text></svg>
<div style="left:1504px;top:248px;width:18px;height:20px;background:#4b4b4b;box-shadow:0 0 0 1px #5c5c5c;border-radius:2px 0 0 2px"></div>
<svg style="left:1508.0px;top:250.75px;" width="9" height="5.5" viewBox="0 0 9 5.5"><polyline points="1,4.5 4.5,1 8,4.5" fill="none" stroke="#e0e0e0" stroke-width="1.6"/></svg>
<svg style="left:1508.0px;top:259.75px;" width="9" height="5.5" viewBox="0 0 9 5.5"><polyline points="1,1 4.5,4.5 8,1" fill="none" stroke="#e0e0e0" stroke-width="1.6"/></svg>
<div style="left:1523px;top:248px;width:43px;height:20px;background:#464646;box-shadow:0 0 0 1px #5c5c5c"></div>
<div style="left:1567px;top:248px;width:17px;height:20px;background:#4b4b4b;box-shadow:0 0 0 1px #5c5c5c;border-radius:0 2px 2px 0"></div>
<svg style="left:1569.0px;top:255.5px;" width="10" height="6" viewBox="0 0 10 6"><polyline points="1,1 5.0,5 9,1" fill="none" stroke="#e0e0e0" stroke-width="1.6"/></svg>
<div class="t n" style="left:1525px;top:252px;color:#f0f0f0">12 pt</div>
<svg style="left:1600px;top:248px;" width="20" height="20" viewBox="0 0 20 20"><path d="M3 6v12M1 8l2-2.500L5 8M1 16l2 2.500L5 16" fill="none" stroke="#c8c8c8" stroke-width="1.100"/><text x="8" y="8" font-family="Liberation Sans,sans-serif" font-size="9" fill="#c8c8c8">A</text><path d="M7 9.800h9" stroke="#c8c8c8" stroke-width="1"/><text x="8" y="19" font-family="Liberation Sans,sans-serif" font-size="9" fill="#c8c8c8">A</text><path d="M7 19.600h9" stroke="#c8c8c8" stroke-width="1"/></svg>
<div style="left:1622px;top:248px;width:18px;height:20px;background:#4b4b4b;box-shadow:0 0 0 1px #5c5c5c;border-radius:2px 0 0 2px"></div>
<svg style="left:1626.0px;top:250.75px;" width="9" height="5.5" viewBox="0 0 9 5.5"><polyline points="1,4.5 4.5,1 8,4.5" fill="none" stroke="#e0e0e0" stroke-width="1.6"/></svg>
<svg style="left:1626.0px;top:259.75px;" width="9" height="5.5" viewBox="0 0 9 5.5"><polyline points="1,1 4.5,4.5 8,1" fill="none" stroke="#e0e0e0" stroke-width="1.6"/></svg>
<div style="left:1641px;top:248px;width:43px;height:20px;background:#464646;box-shadow:0 0 0 1px #5c5c5c"></div>
<div style="left:1685px;top:248px;width:17px;height:20px;background:#4b4b4b;box-shadow:0 0 0 1px #5c5c5c;border-radius:0 2px 2px 0"></div>
<svg style="left:1687.0px;top:255.5px;" width="10" height="6" viewBox="0 0 10 6"><polyline points="1,1 5.0,5 9,1" fill="none" stroke="#e0e0e0" stroke-width="1.6"/></svg>
<div class="t n" style="left:1643px;top:252px;color:#f0f0f0">(14.4 ]</div>
<svg style="left:1482px;top:274px;" width="20" height="20" viewBox="0 0 20 20"><path d="M2.500 3v14M0.500 5l2-2.500 2 2.500M0.500 15l2 2.500 2-2.500" fill="none" stroke="#c8c8c8" stroke-width="1.100"/><text x="6" y="17" font-family="Liberation Serif,serif" font-weight="bold" font-size="19" fill="#c8c8c8">T</text></svg>
<div style="left:1504px;top:274px;width:18px;height:20px;background:#4b4b4b;box-shadow:0 0 0 1px #5c5c5c;border-radius:2px 0 0 2px"></div>
<svg style="left:1508.0px;top:276.75px;" width="9" height="5.5" viewBox="0 0 9 5.5"><polyline points="1,4.5 4.5,1 8,4.5" fill="none" stroke="#e0e0e0" stroke-width="1.6"/></svg>
<svg style="left:1508.0px;top:285.75px;" width="9" height="5.5" viewBox="0 0 9 5.5"><polyline points="1,1 4.5,4.5 8,1" fill="none" stroke="#e0e0e0" stroke-width="1.6"/></svg>
<div style="left:1523px;top:274px;width:43px;height:20px;background:#464646;box-shadow:0 0 0 1px #5c5c5c"></div>
<div style="left:1567px;top:274px;width:17px;height:20px;background:#4b4b4b;box-shadow:0 0 0 1px #5c5c5c;border-radius:0 2px 2px 0"></div>
<svg style="left:1569.0px;top:281.5px;" width="10" height="6" viewBox="0 0 10 6"><polyline points="1,1 5.0,5 9,1" fill="none" stroke="#e0e0e0" stroke-width="1.6"/></svg>
<div class="t n" style="left:1525px;top:278px;color:#f0f0f0">1<span class="z">0</span><span class="z">0</span>%</div>
<svg style="left:1600px;top:274px;" width="20" height="20" viewBox="0 0 20 20"><text x="3" y="14" font-family="Liberation Serif,serif" font-weight="bold" font-size="18" fill="#c8c8c8">T</text><path d="M1 18h17M1 18l2.500-2M1 18l2.500 2M18 18l-2.500-2M18 18l-2.500 2" stroke="#c8c8c8" stroke-width="1.100" fill="none"/></svg>
<div style="left:1622px;top:274px;width:18px;height:20px;background:#4b4b4b;box-shadow:0 0 0 1px #5c5c5c;border-radius:2px 0 0 2px"></div>
<svg style="left:1626.0px;top:276.75px;" width="9" height="5.5" viewBox="0 0 9 5.5"><polyline points="1,4.5 4.5,1 8,4.5" fill="none" stroke="#e0e0e0" stroke-width="1.6"/></svg>
<svg style="left:1626.0px;top:285.75px;" width="9" height="5.5" viewBox="0 0 9 5.5"><polyline points="1,1 4.5,4.5 8,1" fill="none" stroke="#e0e0e0" stroke-width="1.6"/></svg>
<div style="left:1641px;top:274px;width:43px;height:20px;background:#464646;box-shadow:0 0 0 1px #5c5c5c"></div>
<div style="left:1685px;top:274px;width:17px;height:20px;background:#4b4b4b;box-shadow:0 0 0 1px #5c5c5c;border-radius:0 2px 2px 0"></div>
<svg style="left:1687.0px;top:281.5px;" width="10" height="6" viewBox="0 0 10 6"><polyline points="1,1 5.0,5 9,1" fill="none" stroke="#e0e0e0" stroke-width="1.6"/></svg>
<div class="t n" style="left:1643px;top:278px;color:#f0f0f0">1<span class="z">0</span><span class="z">0</span>%</div>
<svg style="left:1482px;top:300px;" width="20" height="20" viewBox="0 0 20 20"><text x="0" y="13" font-family="Liberation Sans,sans-serif" font-size="13" letter-spacing="-2.500" fill="#c8c8c8">V/A</text><path d="M6 17.500h10M6 17.500l3-2.500M6 17.500l3 2.500" stroke="#c8c8c8" stroke-width="1.200" fill="none"/></svg>
<div style="left:1504px;top:300px;width:18px;height:20px;background:#4b4b4b;box-shadow:0 0 0 1px #5c5c5c;border-radius:2px 0 0 2px"></div>
<svg style="left:1508.0px;top:302.75px;" width="9" height="5.5" viewBox="0 0 9 5.5"><polyline points="1,4.5 4.5,1 8,4.5" fill="none" stroke="#e0e0e0" stroke-width="1.6"/></svg>
<svg style="left:1508.0px;top:311.75px;" width="9" height="5.5" viewBox="0 0 9 5.5"><polyline points="1,1 4.5,4.5 8,1" fill="none" stroke="#e0e0e0" stroke-width="1.6"/></svg>
<div style="left:1523px;top:300px;width:43px;height:20px;background:#464646;box-shadow:0 0 0 1px #5c5c5c"></div>
<div style="left:1567px;top:300px;width:17px;height:20px;background:#4b4b4b;box-shadow:0 0 0 1px #5c5c5c;border-radius:0 2px 2px 0"></div>
<svg style="left:1569.0px;top:307.5px;" width="10" height="6" viewBox="0 0 10 6"><polyline points="1,1 5.0,5 9,1" fill="none" stroke="#e0e0e0" stroke-width="1.6"/></svg>
<div class="t" style="left:1525px;top:302px;font-size:12px;line-height:16px;color:#f4f4f4;">自动</div>
<svg style="left:1600px;top:300px;" width="20" height="20" viewBox="0 0 20 20"><rect x="0" y="1" width="19" height="12" fill="#c8c8c8"/><text x="1.500" y="11.500" font-family="Liberation Sans,sans-serif" font-size="11.500" letter-spacing="-1" fill="#535353">VA</text><path d="M1 17.500h17M1 17.500l2.500-2M1 17.500l2.500 2M18 17.500l-2.500-2M18 17.500l-2.500 2" stroke="#c8c8c8" stroke-width="1.100" fill="none"/></svg>
<div style="left:1622px;top:300px;width:18px;height:20px;background:#4b4b4b;box-shadow:0 0 0 1px #5c5c5c;border-radius:2px 0 0 2px"></div>
<svg style="left:1626.0px;top:302.75px;" width="9" height="5.5" viewBox="0 0 9 5.5"><polyline points="1,4.5 4.5,1 8,4.5" fill="none" stroke="#e0e0e0" stroke-width="1.6"/></svg>
<svg style="left:1626.0px;top:311.75px;" width="9" height="5.5" viewBox="0 0 9 5.5"><polyline points="1,1 4.5,4.5 8,1" fill="none" stroke="#e0e0e0" stroke-width="1.6"/></svg>
<div style="left:1641px;top:300px;width:43px;height:20px;background:#464646;box-shadow:0 0 0 1px #5c5c5c"></div>
<div style="left:1685px;top:300px;width:17px;height:20px;background:#4b4b4b;box-shadow:0 0 0 1px #5c5c5c;border-radius:0 2px 2px 0"></div>
<svg style="left:1687.0px;top:307.5px;" width="10" height="6" viewBox="0 0 10 6"><polyline points="1,1 5.0,5 9,1" fill="none" stroke="#e0e0e0" stroke-width="1.6"/></svg>
<div class="t n" style="left:1643px;top:304px;color:#f0f0f0"><span class="z">0</span></div>
<div style="left:42px;top:1026px;width:1608px;height:3px;background:#666666;"></div>
<div style="left:42px;top:1029px;width:1608px;height:1px;background:#585858;"></div>
<div style="left:42px;top:1030px;width:1626px;height:16px;background:#4a4a4a;"></div>
<div style="left:45px;top:1031px;width:51px;height:15px;background:#3f3f3f;box-shadow:0 0 0 1px #565656"></div>
<div class="t n" style="left:48px;top:1032px;color:#f0f0f0">1<span class="z">0</span><span class="z">0</span>%</div>
<div style="left:97px;top:1031px;width:16px;height:15px;background:#484848;box-shadow:0 0 0 1px #565656"></div>
<svg style="left:100.0px;top:1036.75px;" width="9" height="5.5" viewBox="0 0 9 5.5"><polyline points="1,1 4.5,4.5 8,1" fill="none" stroke="#e0e0e0" stroke-width="1.6"/></svg>
<svg style="left:121px;top:1033px;" width="10" height="10" viewBox="0 0 10 10"><path d="M1 0.500v9" stroke="#6a6a6a" stroke-width="1.500"/><path d="M9 0.500v9L3 5z" fill="#6a6a6a"/></svg>
<svg style="left:140px;top:1033px;" width="7" height="10" viewBox="0 0 7 10"><path d="M6 0.500v9L0.500 5z" fill="#6a6a6a"/></svg>
<div style="left:155px;top:1031px;width:40px;height:15px;background:#3f3f3f;box-shadow:0 0 0 1px #565656"></div>
<div class="t n" style="left:159px;top:1032px;color:#f0f0f0">1</div>
<div style="left:196px;top:1031px;width:17px;height:15px;background:#484848;box-shadow:0 0 0 1px #565656"></div>
<svg style="left:200.0px;top:1036.75px;" width="9" height="5.5" viewBox="0 0 9 5.5"><polyline points="1,1 4.5,4.5 8,1" fill="none" stroke="#e0e0e0" stroke-width="1.6"/></svg>
<svg style="left:223px;top:1033px;" width="7" height="10" viewBox="0 0 7 10"><path d="M1 0.500v9L6.500 5z" fill="#6a6a6a"/></svg>
<svg style="left:237px;top:1033px;" width="10" height="10" viewBox="0 0 10 10"><path d="M9 0.500v9" stroke="#6a6a6a" stroke-width="1.500"/><path d="M1 0.500v9L7 5z" fill="#6a6a6a"/></svg>
<div style="left:257px;top:1031px;width:199px;height:15px;background:#484848;box-shadow:0 0 0 1px #525252"></div>
<div class="t" style="left:344px;top:1033px;font-size:12px;line-height:15px;color:#c8c8c8;">矩形</div>
<svg style="left:461px;top:1033px;" width="8" height="11" viewBox="0 0 8 11"><path d="M1 0.500v10L7.500 5.500z" fill="#dcdcdc"/></svg>
<svg style="left:479.75px;top:1033.0px;" width="5.5" height="10" viewBox="0 0 5.5 10"><polyline points="4.5,1 1,5.0 4.5,9" fill="none" stroke="#b0b0b0" stroke-width="1.4"/></svg>
<div style="left:476px;top:1030px;width:1174px;height:16px;background:#4c4c4c;"></div>
<svg style="left:479.75px;top:1033.0px;" width="5.5" height="10" viewBox="0 0 5.5 10"><polyline points="4.5,1 1,5.0 4.5,9" fill="none" stroke="#b0b0b0" stroke-width="1.4"/></svg>
<div style="left:1040px;top:1032px;width:26px;height:13px;background:#5a5a5a;border-radius:6px"></div>
<svg style="left:1638.75px;top:1033.0px;" width="5.5" height="10" viewBox="0 0 5.5 10"><polyline points="1,1 4.5,5.0 1,9" fill="none" stroke="#b0b0b0" stroke-width="1.4"/></svg>
<div style="left:1650px;top:1030px;width:18px;height:16px;background:#4e4e4e;"></div>
<svg style="left:1754px;top:1038px;" width="40" height="9" viewBox="0 0 40 9"><path d="M3 1.500C12 9.500 28 9.500 37 1.500C28 6 12 6 3 1.500z" fill="#f6eeee"/><path d="M10 2.500C15 0.800 25 0.800 30 2.500C25 6 15 6 10 2.500z" fill="#f4f0ee"/><path d="M6 2C14 7.500 26 7.500 34 2" fill="none" stroke="#8c2a2a" stroke-width="0.900"/></svg>
<div style="left:0px;top:1046px;width:1920px;height:1px;background:#333d48;"></div>
<div style="left:0;top:1047px;width:1920px;height:7px;background:linear-gradient(180deg,#c6d2de 0,#c6d2de 1px,#8ea2ba 1px,#8398b2 100%)"></div>
<div style="left:105px;top:1046px;width:160px;height:8px;background:linear-gradient(90deg,#dde4ec,#bcc8d4 55%,#a8b6c4);border:1px solid #2c3844;border-bottom:0;border-radius:3px 3px 0 0;box-shadow:inset 0 1px 0 #f4f8fc"></div>
<div style="left:266px;top:1046px;width:161px;height:8px;background:linear-gradient(90deg,#dde4ec,#bcc8d4 55%,#a8b6c4);border:1px solid #2c3844;border-bottom:0;border-radius:3px 3px 0 0;box-shadow:inset 0 1px 0 #f4f8fc"></div>
<div style="left:428px;top:1046px;width:161px;height:8px;background:linear-gradient(90deg,#dde4ec,#bcc8d4 55%,#a8b6c4);border:1px solid #2c3844;border-bottom:0;border-radius:3px 3px 0 0;box-shadow:inset 0 1px 0 #f4f8fc"></div>
<div style="left:590px;top:1046px;width:161px;height:8px;background:linear-gradient(90deg,#dde4ec,#bcc8d4 55%,#a8b6c4);border:1px solid #2c3844;border-bottom:0;border-radius:3px 3px 0 0;box-shadow:inset 0 1px 0 #f4f8fc"></div>
<div style="left:752px;top:1046px;width:160px;height:8px;background:linear-gradient(90deg,#dde4ec,#bcc8d4 55%,#a8b6c4);border:1px solid #2c3844;border-bottom:0;border-radius:3px 3px 0 0;box-shadow:inset 0 1px 0 #f4f8fc"></div>
<div style="left:913px;top:1046px;width:159px;height:8px;background:linear-gradient(90deg,#dde4ec,#bcc8d4 55%,#a8b6c4);border:1px solid #2c3844;border-bottom:0;border-radius:3px 3px 0 0;box-shadow:inset 0 1px 0 #f4f8fc"></div>
<div style="left:1073px;top:1046px;width:161px;height:8px;background:linear-gradient(90deg,#dde4ec,#bcc8d4 55%,#a8b6c4);border:1px solid #2c3844;border-bottom:0;border-radius:3px 3px 0 0;box-shadow:inset 0 1px 0 #f4f8fc"></div>
<div style="left:1235px;top:1046px;width:161px;height:8px;background:linear-gradient(90deg,#f8f2e8,#f4dcc2 60%,#eaccaa);border:1px solid #3a3a40;border-bottom:0;border-radius:3px 3px 0 0;box-shadow:inset 0 1px 0 #fff"></div>
<div style="left:9px;top:1042px;width:35px;height:35px;border-radius:18px;background:radial-gradient(circle at 50% 30%,#d4e6f4,#6a9ac6 55%,#2a5a8c);border:1px solid #2a4058"></div>
<svg style="left:19px;top:1046px;" width="16" height="8" viewBox="0 0 16 8"><path d="M2 8C2.500 3 7 2 8 7v1z" fill="#e85a24"/><path d="M9.500 8V5.500c2-2.500 5-1.500 5.500 2.500z" fill="#6fb43a"/></svg>
<div style="left:74px;top:1051px;width:14px;height:3px;background:#f4f4f4;border-radius:2px 2px 0 0"></div>
<div style="left:1905px;top:1048px;width:15px;height:6px;background:#a8b6c6;border-left:1px solid #5a6a7c"></div>
</body></html>
